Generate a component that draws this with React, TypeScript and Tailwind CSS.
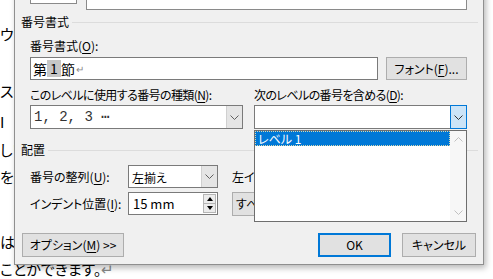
import React from "react";

const jp = "font-['Noto_Sans_CJK_JP',sans-serif] [font-feature-settings:'palt']";

const Chevron = ({ color = "#606060" }: { color?: string }) => (
  <svg width="9" height="5" viewBox="0 0 9 5">
    <path d="M0.5 0.5 L4.5 4.5 L8.5 0.5" fill="none" stroke={color} strokeWidth="1" />
  </svg>
);

const ChevronUp = ({ color = "#c0c0c0" }: { color?: string }) => (
  <svg width="9" height="5" viewBox="0 0 9 5">
    <path d="M0.5 4.5 L4.5 0.5 L8.5 4.5" fill="none" stroke={color} strokeWidth="1" />
  </svg>
);

const U = ({ children }: { children: React.ReactNode }) => (
  <span className="underline underline-offset-2">{children}</span>
);

// 背景の文書（ダイアログの左に少しだけ見える）
const DocText = () => (
  <div className={`flex flex-col text-[15px] leading-[27px] text-black ${jp}`}>
    <div className="mt-[20px] h-[27px]">ウ</div>
    <div className="mt-[30px] h-[27px]">スタ</div>
    <div className="mt-[4px] h-[27px]">I</div>
    <div className="mt-[1px] h-[27px]">しい</div>
    <div className="h-[27px]">を選</div>
    <div className="mt-[38px] h-[27px]">は、</div>
    <div className="h-[27px]">
      ことができます。<span className="text-[#8a8a8a]">↵</span>
    </div>
  </div>
);

const Home = () => {
  return (
    <main className="relative h-[279px] w-[493px] overflow-hidden bg-white">
      <DocText />

      <div
        className={`absolute left-[14px] top-[-40px] flex h-[305px] w-[470px] flex-col border border-[#8f8f8f] bg-[#f0f0f0] pb-[7px] text-[12px] leading-[16px] text-black shadow-[2px_3px_6px_rgba(0,0,0,0.28)] ${jp}`}
      >
        {/* 上のリストとプレビュー */}
        <div className="flex h-[49px] items-start">
          <div className="ml-[15px] h-[43px] w-[47px] border border-[#8a8a8a] bg-white" />
          <div className="ml-[9px] h-[49px] w-[381px] border border-[#8a8a8a] bg-white" />
        </div>

        {/* 番号書式 */}
        <div className="mt-[4px] flex h-[16px] items-center pl-[6px] pr-[5px]">
          <span>番号書式</span>
          <div className="ml-[3px] h-px flex-1 bg-[#dcdcdc]" />
        </div>

        <div className="mt-[8px] h-[16px] pl-[15px]">
          番号書式(<U>O</U>):
        </div>

        <div className="mt-[3px] flex h-[23px] pl-[15px]">
          <div className="flex h-[23px] w-[348px] items-center border border-[#7a7a7a] bg-white pl-[2px] text-[14px]">
            <span>第</span>
            <span className="inline-block h-[17px] w-[14px] bg-[#c6c6c6] text-center leading-[17px]">1</span>
            <span>節</span>
            <span className="ml-[1px] text-[10px] text-[#8a8a8a]">↵</span>
          </div>
          <button className="ml-[8px] h-[23px] w-[81px] border border-[#adadad] bg-[#e1e1e1]">
            フォント(<U>F</U>)...
          </button>
        </div>

        <div className="mt-[7px] flex h-[16px] pl-[15px]">
          <div className="w-[224px] tracking-[-0.6px]">
            このレベルに使用する番号の種類(<U>N</U>):
          </div>
          <div className="tracking-[-0.6px]">
            次のレベルの番号を含める(<U>D</U>):
          </div>
        </div>

        <div className="mt-[2px] flex h-[24px] pl-[15px]">
          <div className="flex h-[24px] w-[213px] border border-[#7a7a7a] bg-white">
            <div className="flex flex-1 items-center pl-[3px] font-['Liberation_Mono',monospace] text-[14px] text-[#333]">
              1, 2, 3 ⋯
            </div>
            <div className="flex w-[16px] items-center justify-center border-l border-[#d0d0d0] bg-[#e5e5e5]">
              <Chevron />
            </div>
          </div>

          <div className="relative z-10 ml-[11px] flex h-[24px] w-[213px]">
            <div className="flex-1 border-y border-l border-[#7a7a7a] bg-white" />
            <div className="flex w-[17px] items-center justify-center border border-[#0078d7] bg-[#cce4f7]">
              <Chevron color="#333333" />
            </div>

            {/* ドロップダウンリスト */}
            <div className="absolute left-0 top-[25px] flex h-[92px] w-[213px] border border-[#6e6e6e] bg-white">
              <div className="flex-1">
                <div className="flex h-[15px] items-center border border-dotted border-[#d8d8b0] bg-[#0078d7] pl-[2px] text-white">
                  レベル 1
                </div>
              </div>
              <div className="flex w-[16px] flex-col justify-between bg-[#f7f7f7]">
                <div className="flex h-[17px] items-center justify-center">
                  <ChevronUp />
                </div>
                <div className="flex h-[17px] items-center justify-center">
                  <Chevron color="#c0c0c0" />
                </div>
              </div>
            </div>
          </div>
        </div>

        {/* 配置 */}
        <div className="mt-[13px] flex h-[16px] items-center pl-[6px] pr-[5px]">
          <span>配置</span>
          <div className="ml-[3px] h-px flex-1 bg-[#dcdcdc]" />
        </div>

        <div className="mt-[7px] flex h-[23px] items-center pl-[15px]">
          <div className="w-[98px]">
            番号の整列(<U>U</U>):
          </div>
          <div className="flex h-[23px] w-[90px] border border-[#7a7a7a] bg-white">
            <div className="flex flex-1 items-center pl-[3px] pt-[2px]">左揃え</div>
            <div className="flex w-[16px] items-center justify-center border-l border-[#d0d0d0] bg-[#e5e5e5]">
              <Chevron />
            </div>
          </div>
          <div className="ml-[14px] whitespace-nowrap">
            左インデントからの距離(<U>A</U>):
          </div>
        </div>

        <div className="mt-[4px] flex h-[23px] items-center pl-[15px]">
          <div className="w-[98px]">
            インデント位置(<U>I</U>):
          </div>
          <div className="flex h-[23px] w-[90px] border border-[#7a7a7a] bg-white">
            <div className="flex flex-1 items-center pl-[4px] text-[13px]">15 mm</div>
            <div className="my-[1px] mr-[1px] flex w-[13px] flex-col">
              <div className="flex flex-1 items-center justify-center border border-[#b5b5b5] bg-[#ececec]">
                <svg width="6" height="4" viewBox="0 0 6 4">
                  <path d="M0 4 L3 0 L6 4 Z" fill="#000" />
                </svg>
              </div>
              <div className="flex flex-1 items-center justify-center border border-t-0 border-[#b5b5b5] bg-[#ececec]">
                <svg width="6" height="4" viewBox="0 0 6 4">
                  <path d="M0 0 L3 4 L6 0 Z" fill="#000" />
                </svg>
              </div>
            </div>
          </div>
          <button className="ml-[14px] h-[24px] w-[120px] whitespace-nowrap border border-[#adadad] bg-[#e1e1e1] pl-[3px] text-left">
            すべてのレベルに設定(<U>E</U>)...
          </button>
        </div>

        {/* ボタン */}
        <div className="mt-[18px] flex h-[24px] pl-[7px] pr-[7px]">
          <button className="h-[24px] w-[102px] border border-[#adadad] bg-[#e1e1e1]">
            オプション(<U>M</U>) &gt;&gt;
          </button>
          <button className="ml-auto h-[24px] w-[73px] border-2 border-[#0078d7] bg-[#e1e1e1]">
            OK
          </button>
          <button className="ml-[11px] h-[24px] w-[74px] border border-[#adadad] bg-[#e1e1e1]">
            キャンセル
          </button>
        </div>
      </div>
    </main>
  );
};

export default Home;
